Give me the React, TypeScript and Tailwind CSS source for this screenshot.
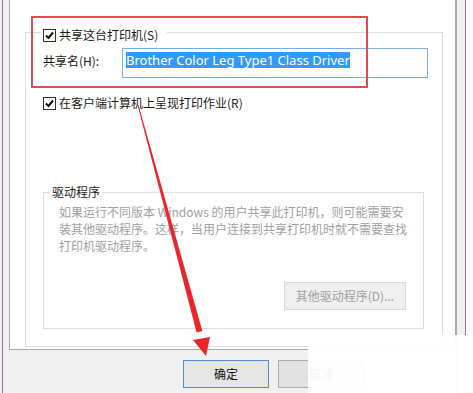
import { FC } from "react";

const font = "font-['Noto_Sans_CJK_SC','Noto_Sans',sans-serif]";

const CheckBox: FC = () => (
	<span className="inline-flex w-[13px] h-[13px] shrink-0 items-center justify-center border border-[#333333] bg-white">
		<svg width="11" height="11" viewBox="0 0 11 11">
			<polyline points="2,5.5 4.5,8 9,2.5" fill="none" stroke="#111" strokeWidth="2" />
		</svg>
	</span>
);

const Arrow: FC = () => (
	<svg className="absolute left-0 top-0 pointer-events-none" width="473" height="393" viewBox="0 0 473 393">
		<polygon points="138.5,104.9 202.4,331 196.6,332.6 137.5,105.1" fill="#e8262c" />
		<polygon points="193,340 210,337 206,356" fill="#e8262c" />
	</svg>
);

const App: FC = () => {
	return (
		<div className={`relative w-[473px] h-[393px] overflow-hidden bg-[#f0f0f0] flex text-[12px] text-[#1a1a1a] ${font}`}>
			<div className="w-[2px]"></div>
			<div className="w-[1px] bg-[#9c6f9c]"></div>
			<div className="w-[6px]"></div>

			<div className="w-[447px] flex flex-col">
				<div className="h-[350px] bg-white border-x border-b border-[#a9a9a9]">
					<fieldset className="ml-[15px] mt-[22px] w-[418px] h-[325px] border border-[#dcdcdc] pl-[14px]">
						<legend className="pt-[6px] pl-[3px] pr-[9px]">
							<span className="flex items-center gap-[3px] leading-[14px]">
								<CheckBox />
								<span>共享这台打印机(S)</span>
							</span>
						</legend>

						<div className="flex items-start mt-[6px] pl-[3px]">
							<span className="w-[79px] mt-[6px] leading-[14px]">共享名(H):</span>
							<div className="w-[306px] h-[30px] border border-[#7eaee0] bg-white pl-[3px]">
								<span className="inline-block mt-[3px] leading-[16px] bg-[#3399ff] text-white text-[13px] font-['Noto_Sans',sans-serif]">
									Brother Color Leg Type1 Class Driver
								</span>
							</div>
						</div>

						<div className="flex items-center gap-[3px] mt-[18px] pl-[3px] leading-[14px]">
							<CheckBox />
							<span>在客户端计算机上呈现打印作业(R)</span>
						</div>

						<fieldset className="ml-[3px] mt-[75px] w-[381px] h-[144px] border border-[#dcdcdc] pl-[6px]">
							<legend className="px-[2px] leading-[14px]">驱动程序</legend>
							<p className="ml-[9px] mt-[4px] leading-[17px] text-[#a0a0a0] whitespace-nowrap">
								如果运行不同版本 Windows 的用户共享此打印机，则可能需要安
								<br />
								装其他驱动程序。这样，当用户连接到共享打印机时就不需要查找
								<br />
								打印机驱动程序。
							</p>
							<div className="flex justify-end pr-[17px] mt-[28px]">
								<button className="w-[122px] h-[28px] border border-[#d9d9d9] bg-[#efefef] text-[#a0a0a0]">
									其他驱动程序(D)...
								</button>
							</div>
						</fieldset>
					</fieldset>
				</div>

				<div className="flex gap-[9px] pt-[10px] pl-[174px]">
					<button className="w-[86px] h-[28px] border border-[#4a8fd4] bg-[#e5e5e5] text-[#111]">确定</button>
					<button className="w-[86px] h-[28px] border border-[#adadad] bg-[#e1e1e1] text-[#111]">取消</button>
				</div>
			</div>

			<div className="w-[9px] border-l border-[#a9a9a9]"></div>
			<div className="w-[1px] bg-[#9c6f9c]"></div>
			<div className="flex-1 bg-white"></div>

			{/* annotation box */}
			<div className="absolute left-[31px] top-[16px] w-[337px] h-[72px] border-2 border-[#dc4a52]"></div>
			<Arrow />
			{/* watermark haze */}
			<div className="absolute left-[308px] top-[335px] w-[165px] h-[58px] bg-white/95"></div>
		</div>
	);
};

export default App;
